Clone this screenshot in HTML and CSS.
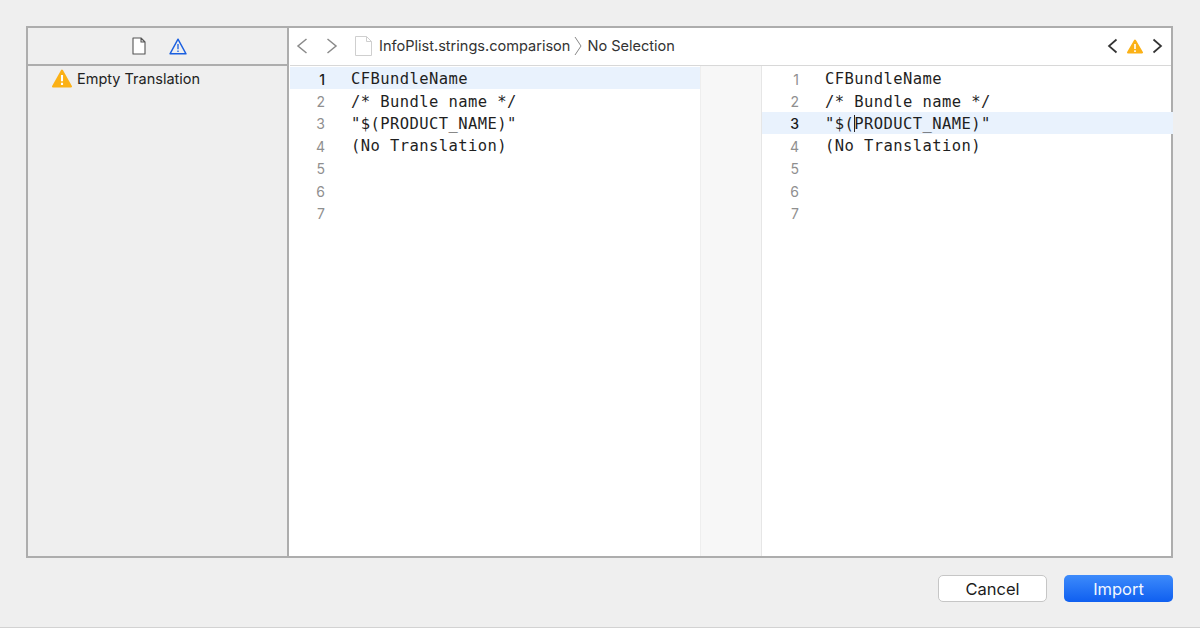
FILE: index.html
```html
<!DOCTYPE html>
<html lang="en">
<head>
<meta charset="utf-8">
<title>Import Localizations</title>
<link rel="stylesheet" href="styles.css">
</head>
<body>
<div class="dialog">
  <div class="box">
    <aside class="sidebar">
      <div class="side-tabs">
        <svg class="tab-doc" width="14" height="18" viewBox="0 0 14 18"><path d="M1 1H9L13 5V17H1Z M9 1V5H13" fill="#fff" stroke="#555" stroke-width="1.1" stroke-linejoin="round"/></svg>
        <svg class="tab-warn" width="18" height="17" viewBox="0 0 18 17"><path d="M9 1.2L17 15.8H1Z" fill="none" stroke="#1a5fe0" stroke-width="1.4" stroke-linejoin="round"/><path d="M9 6V11.2M9 12.6V14" stroke="#1a5fe0" stroke-width="1.3"/></svg>
      </div>
      <div class="issue">
        <svg width="20" height="19" viewBox="0 0 20 19"><path d="M10 1.5L19 17.5H1Z" fill="#fbb116" stroke="#fbb116" stroke-width="2" stroke-linejoin="round"/><path d="M10 6V12.2M10 13.8V16" stroke="#fff" stroke-width="2.1"/></svg>
        <span>Empty Translation</span>
      </div>
    </aside>
    <main class="content">
      <header class="jumpbar">
        <svg class="nav-icon" width="12" height="16" viewBox="0 0 12 16"><path d="M10.5 1L2 8L10.5 15" fill="none" stroke="#8a8a8a" stroke-width="1.5"/></svg>
        <svg class="nav-icon fwd" width="12" height="16" viewBox="0 0 12 16"><path d="M1.5 1L10 8L1.5 15" fill="none" stroke="#8a8a8a" stroke-width="1.5"/></svg>
        <svg class="file-icon" width="17" height="20" viewBox="0 0 17 20"><path d="M.5.5H11.5L16.5 5.5V19.5H.5Z M11.5.5V5.5H16.5" fill="#fff" stroke="#cfcfcf"/></svg>
        <span class="crumb">InfoPlist.strings.comparison</span>
        <svg class="sep" width="8" height="20" viewBox="0 0 8 20"><path d="M1 1L7 10L1 19" fill="none" stroke="#888" stroke-width="1"/></svg>
        <span class="crumb">No Selection</span>
        <div class="issue-nav">
          <svg width="11" height="16" viewBox="0 0 11 16"><path d="M9.5 1.5L2 8L9.5 14.5" fill="none" stroke="#333" stroke-width="1.7"/></svg>
          <svg width="16" height="15" viewBox="0 0 16 15"><path d="M8 1.5L15 13.5H1Z" fill="#fbb116" stroke="#fbb116" stroke-width="2" stroke-linejoin="round"/><path d="M8 5V10M8 11.2V13" stroke="#fff" stroke-width="1.6"/></svg>
          <svg width="11" height="16" viewBox="0 0 11 16"><path d="M1.5 1.5L9 8L1.5 14.5" fill="none" stroke="#333" stroke-width="1.7"/></svg>
        </div>
      </header>
      <div class="panes">
        <section class="pane left">
          <div class="line current"><span class="num">1</span><span class="code">CFBundleName</span></div>
          <div class="line"><span class="num">2</span><span class="code">/* Bundle name */</span></div>
          <div class="line"><span class="num">3</span><span class="code">"$(PRODUCT_NAME)"</span></div>
          <div class="line"><span class="num">4</span><span class="code">(No Translation)</span></div>
          <div class="line"><span class="num">5</span></div>
          <div class="line"><span class="num">6</span></div>
          <div class="line"><span class="num">7</span></div>
        </section>
        <div class="gutter"></div>
        <section class="pane right">
          <div class="line"><span class="num">1</span><span class="code">CFBundleName</span></div>
          <div class="line"><span class="num">2</span><span class="code">/* Bundle name */</span></div>
          <div class="line current"><span class="num">3</span><span class="code">"$(<span class="caret"></span>PRODUCT_NAME)"</span></div>
          <div class="line"><span class="num">4</span><span class="code">(No Translation)</span></div>
          <div class="line"><span class="num">5</span></div>
          <div class="line"><span class="num">6</span></div>
          <div class="line"><span class="num">7</span></div>
        </section>
      </div>
    </main>
  </div>
  <footer class="actions">
    <button class="btn cancel" type="button">Cancel</button>
    <button class="btn import" type="button">Import</button>
  </footer>
</div>
</body>
</html>
```
FILE: styles.css
```css
* { box-sizing: border-box; }
html, body { margin: 0; height: 100%; }
body {
  background: #efefef;
  font-family: Inter, "Liberation Sans", sans-serif;
  overflow: hidden;
}
.dialog {
  height: 628px;
  padding: 26px 27px 0 26px;
  display: flex;
  flex-direction: column;
  border-bottom: 1px solid #d2d2d2;
}
.box {
  height: 532px;
  display: flex;
  border: 2px solid #adadad;
  background: #fff;
}
.sidebar {
  width: 261px;
  background: #efefef;
  border-right: 2px solid #adadad;
  flex: none;
}
.side-tabs {
  height: 38px;
  border-bottom: 2px solid #adadad;
  display: flex;
  align-items: center;
  justify-content: center;
  gap: 23px;
  padding: 0 0 0 3px;
}
.issue {
  display: flex;
  align-items: center;
  gap: 5px;
  padding: 0 0 0 24px;
  font-size: 14.5px;
  color: #222;
  height: 24px;
}
.content { flex: 1; display: flex; flex-direction: column; min-width: 0; border-left: 1px solid #fff; }
.jumpbar {
  height: 38px;
  display: flex;
  align-items: center;
  border-bottom: 1px solid #d8d8d8;
  padding: 0 8px 1px 6px;
  font-size: 14.55px;
  color: #333;
}
.nav-icon { margin-right: 18px; }
.nav-icon.fwd { margin-right: 17px; }
.file-icon { margin-right: 7px; }
.sep { margin: 0 5px 0 4px; }
.issue-nav { margin-left: auto; display: flex; align-items: center; gap: 9px; }
.panes { flex: 1; display: flex; }
.pane { width: 410px; flex: none; padding-top: 1px; }
.gutter { width: 62px; background: #f7f7f7; border-left: 1px solid #eee; border-right: 1px solid #e6e6e6; flex: none; }
.pane.right { width: 411px; }
.line {
  height: 22.4px;
  display: flex;
  align-items: center;
  padding-top: 2px;
  font-family: "DejaVu Sans Mono", "Liberation Mono", monospace;
  font-size: 15.5px;
  color: #1f1f1f;
}
.current { background: #e9f2fd; }
.num {
  width: 35px;
  text-align: right;
  font-family: Inter, "Liberation Sans", sans-serif;
  font-size: 14px;
  color: #8f8f8f;
  margin-right: 26px;
  flex: none;
}
.current .num { color: #1a1a1a; font-weight: 500; }
.right .num { width: 37px; margin-right: 26px; }
.code { letter-spacing: .42px; white-space: pre; }
.caret { display: inline-block; width: 1px; height: 17px; background: #222; vertical-align: -3px; margin-right: -1px; }
.actions {
  display: flex;
  justify-content: flex-end;
  gap: 17px;
  padding-top: 17px;
}
.btn {
  width: 109px;
  height: 27px;
  border-radius: 5px;
  font-family: Inter, "Liberation Sans", sans-serif;
  font-size: 16.5px;
  padding: 0;
}
.cancel { background: #fff; border: 1px solid #c6c6c6; color: #1c1c1c; }
.import { background: linear-gradient(#3d8bfb, #0f5ff0); border: 0; color: #f2f7ff; }
```
